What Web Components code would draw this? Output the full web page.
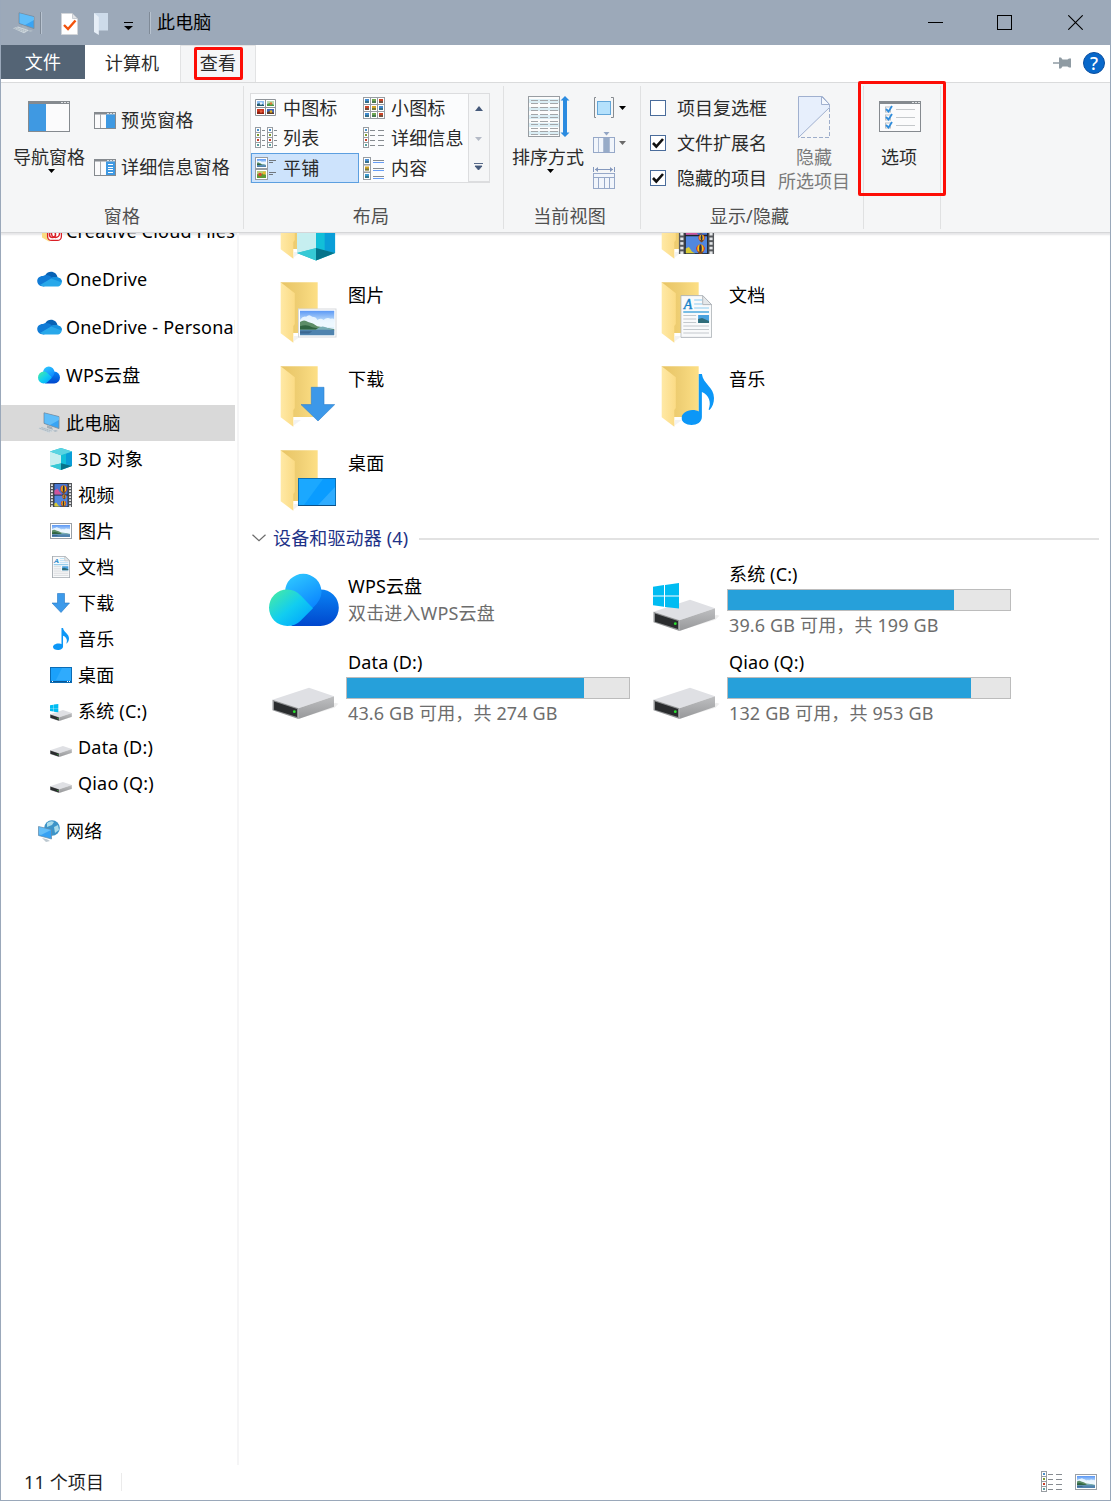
<!DOCTYPE html>
<html lang="zh-CN">
<head>
<meta charset="utf-8">
<title>此电脑</title>
<style>
    html, body { margin: 0; height: 100%; }
    body {
        font: 18px/24px "Noto Sans", "Noto Sans CJK SC", sans-serif;
        letter-spacing: .14px;
        color: #000;
        background: #fff;
        overflow: hidden;
    }
</style>
</head>
<body>
<explorer-window>
    <title-bar slot="title">此电脑</title-bar>
    <ribbon-tabs slot="tabs"></ribbon-tabs>
    <ribbon-bar slot="ribbon"></ribbon-bar>
    <nav-pane slot="nav">
        <nav-item icon="ccfiles" w="25">Creative Cloud Files</nav-item>
        <nav-item icon="onedrive" w="25">OneDrive</nav-item>
        <nav-item icon="onedrive" w="25">OneDrive - Personal</nav-item>
        <nav-item icon="wps">WPS云盘</nav-item>
        <nav-item icon="pc" selected>此电脑</nav-item>
        <nav-item icon="cube" child>3D 对象</nav-item>
        <nav-item icon="film" child>视频</nav-item>
        <nav-item icon="picture" child>图片</nav-item>
        <nav-item icon="doc" child>文档</nav-item>
        <nav-item icon="down" child>下载</nav-item>
        <nav-item icon="music" child>音乐</nav-item>
        <nav-item icon="desktop" child>桌面</nav-item>
        <nav-item icon="driveCsmall" child>系统 (C:)</nav-item>
        <nav-item icon="driveSmall" child>Data (D:)</nav-item>
        <nav-item icon="driveSmall" child>Qiao (Q:)</nav-item>
        <nav-item icon="network">网络</nav-item>
    </nav-pane>
    <file-pane slot="files">
        <folder-tile slot="folders" icon="f3d"></folder-tile>
        <folder-tile slot="folders" icon="fvideo"></folder-tile>
        <folder-tile slot="folders" icon="fpicture">图片</folder-tile>
        <folder-tile slot="folders" icon="fdoc">文档</folder-tile>
        <folder-tile slot="folders" icon="fdown">下载</folder-tile>
        <folder-tile slot="folders" icon="fmusic">音乐</folder-tile>
        <folder-tile slot="folders" icon="fdesktop">桌面</folder-tile>
        <span slot="heading">设备和驱动器 (4)</span>
        <drive-tile slot="drives" icon="wpsBig" note="双击进入WPS云盘">WPS云盘</drive-tile>
        <drive-tile slot="drives" icon="driveC" used="226" note="39.6 GB 可用，共 199 GB">系统 (C:)</drive-tile>
        <drive-tile slot="drives" icon="drive" used="237" note="43.6 GB 可用，共 274 GB">Data (D:)</drive-tile>
        <drive-tile slot="drives" icon="drive" used="243" note="132 GB 可用，共 953 GB">Qiao (Q:)</drive-tile>
    </file-pane>
    <status-bar slot="status">11 个项目</status-bar>
</explorer-window>

<script>
    // ---- icon drawings ----

    const skyGradient = `<linearGradient id="sky" x1="0" y1="0" x2="0" y2="1">
        <stop offset="0" stop-color="#5a97f5"/><stop offset=".5" stop-color="#cfe9fb"/><stop offset="1" stop-color="#e6f4fb"/></linearGradient>`;

    // landscape photo with a white frame
    const photo = (x, y, w, h, frame = '#9aa0a6') => `
        <defs>${skyGradient}</defs>
        <rect x="${x + .5}" y="${y + .5}" width="${w - 1}" height="${h - 1}" fill="#fff" stroke="${frame}"/>
        <svg x="${x + 2}" y="${y + 2}" width="${w - 4}" height="${h - 4}" viewBox="2 2 34 24" preserveAspectRatio="none">
            <rect x="2" y="2" width="34" height="24" fill="url(#sky)"/>
            <path d="M2 11q3-4 6-3 3-3 6 0 4 0 5 3 4-2 6 0 4-3 7-1 3-1 4 1v7H2z" fill="#f2faff" opacity=".85"/>
            <path d="M2 13q4-3 8 0 5 1 9 4l17 3v1H2z" fill="#5c8d68"/>
            <path d="M2 17q7-2 12 1l10 2H2z" fill="#2f6441"/>
            <path d="M18 20q5-4 9-2l9 3H18z" fill="#79aeb6"/>
            <rect x="2" y="20.500" width="34" height="5.500" fill="#4f83ae"/>
            <path d="M2 22h12l-3 2H2z" fill="#3b6791"/>
        </svg>`;

    const film = (x, y, w, h) => {
        let holes = '';
        for (let i = 0; i < 8; i++) {
            holes += `<rect x="1" y="${1.3 + i * 3}" width="2" height="1.700"/><rect x="19.500" y="${1.3 + i * 3}" width="2" height="1.700"/>`;
        }
        const balloon = (cx, cy, r) => `
            <circle cx="${cx}" cy="${cy}" r="${r}" fill="#d82b20"/>
            <ellipse cx="${cx}" cy="${cy}" rx="${r * .75}" ry="${r}" fill="#f2c21a"/>
            <ellipse cx="${cx}" cy="${cy}" rx="${r * .3}" ry="${r}" fill="#252a52"/>
            <path d="M${cx - r * .7} ${cy + r * .7}h${r * 1.4}l-${r * .5} ${r * .7}h-${r * .4}z" fill="#7c471d"/>`;
        return `<svg x="${x}" y="${y}" width="${w}" height="${h}" viewBox="0 0 22.500 24" preserveAspectRatio="none">
            <rect width="22.500" height="24" fill="#55585c"/><g fill="#e4e6e8">${holes}</g>
            <rect x="3.700" width="15" height="24" fill="#202228"/>
            <rect x="4.500" y=".8" width="13.500" height="10.700" fill="#4775cf"/>
            <rect x="4.500" y="12.500" width="13.500" height="11" fill="#5187df"/>
            <path d="M4.500 11.500v-4l3-2 2 3 3 3z" fill="#d0559b"/>
            ${balloon(14, 6, 3.400)}${balloon(14.500, 13.500, 2)}${balloon(13.800, 20.500, 2.700)}
            <path d="M4.500 23.500v-3l2-1 2 3 2 1z" fill="#d9cb35"/>
        </svg>`;
    };

    const cube = `
        <path d="M11 0L22 3.500V18L11 22 0 18V3.500z" fill="#23bccb"/>
        <path d="M0 3.500l11 3.800v8.200L0 18z" fill="#c6eff0"/>
        <path d="M22 3.500L11 7.300v8.200L22 18z" fill="#0a9ed8"/>
        <path d="M11 7.300l5-2v12l-5-1.800z" fill="#12bfd8"/>
        <path d="M0 3.500L11 0l11 3.500L11 7.300z" fill="#59d4e2"/>
        <path d="M0 18l11-2.700V22z" fill="#36c9d5"/>
        <path d="M22 18l-11-2.700V22z" fill="#05748b"/>`;

    const wps = `
        <defs>
            <linearGradient id="w1" x1=".2" y1="0" x2=".8" y2="1"><stop offset="0" stop-color="#2fc8ff"/><stop offset="1" stop-color="#0a84ff"/></linearGradient>
            <linearGradient id="w2" x1="0" y1=".2" x2=".8" y2="1"><stop offset="0" stop-color="#41e8ac"/><stop offset=".5" stop-color="#12cdf0"/><stop offset="1" stop-color="#00a6ff"/></linearGradient>
            <linearGradient id="w3" x1=".6" y1="0" x2=".6" y2="1"><stop offset="0" stop-color="#0a84f5"/><stop offset="1" stop-color="#0047cd"/></linearGradient>
        </defs>
        <path d="M51.500 15.700a18.300 18.300 0 0 1 0 36.600H22L42 30z" fill="url(#w3)"/>
        <path d="M16 18.300A18.250 18.250 0 0 1 52.500 18.300q0 8-9 16.200L32 25q-6-7-16-6z" fill="url(#w1)"/>
        <path d="M18.300 15.700A18.300 18.300 0 0 0 18.300 52.300q8 0 13-5L44 34.500 32 22q-6-6.300-13.700-6.300z" fill="url(#w2)"/>`;

    const pc = `
        <path d="M6 .8l15 3.800v12L6 11.400z" fill="#39a4f4" stroke="#7c8a97" stroke-width=".8"/>
        <path d="M6.500 1.300L21 5v3L12 13l-5.500-2z" fill="#6cc6fb" opacity=".75"/>
        <path d="M9 13.200l5 1.800 1 3-6-1.500z" fill="#a4b0b9"/>
        <path d="M0 16.200l5-1.700 11 3.700-5 3z" fill="#cfd8de"/>
        <path d="M1.500 16.300l10 3.400M3.500 15.600l10 3.300" stroke="#8695a1" stroke-width=".6" stroke-dasharray="1.400 .6"/>
        <path d="M15 18.500l3-.5 2 1-3 1z" fill="#aebbc5"/>`;

    const docLines = (x, y, w, h) => `
        <svg x="${x}" y="${y}" width="${w}" height="${h}" viewBox="0 0 32 43" preserveAspectRatio="none">
            <path d="M.6.6h22l9 9v32.800H.6z" fill="#f9fafb" stroke="#a4aab0" stroke-width="${w < 20 ? 2 : .8}"/>
            <path d="M22.600.6v9h9z" fill="#e5e8ea" stroke="#b0b5ba"/>
            <text x="3.500" y="14" font-family="Liberation Serif" font-style="italic" font-size="14" fill="#1583c9" stroke="#1583c9" stroke-width=".4">A</text>
            <path d="M14 5h8M14 9h8M14 13h15" stroke="#8bcdf0"/>
            <path d="M3 17h26" stroke="#4ba8de" stroke-width="1.300"/>
            <path d="M3 20.500h13M3 24h13M3 27.500h13M3 31h26M3 34.500h26M3 38h26" stroke="#c4c9cd"/>
            <rect x="18" y="20" width="11" height="8" fill="#4aa2df"/>
            <path d="M18 24l4-1 7 3v2H18z" fill="#2e6c79"/>
        </svg>`;

    const note = (x, y, w, h) => `
        <svg x="${x}" y="${y}" width="${w}" height="${h}" viewBox="0 0 33 51" preserveAspectRatio="none">
            <path d="M17.500 0h3.200c1.300 10 12.300 13 12.300 24 0 5-1.500 9-4.500 12l-1-.6c3-7 .5-14.500-6.800-17.500V43c0 5-5 8-10.500 8S0 48 0 44s5-8 11-8c3 0 5 .5 6.500 1.500z" fill="#0c97f7"/>
        </svg>`;

    const drive = `
        <defs>
            <linearGradient id="side" x1="0" y1="0" x2="0" y2="1"><stop offset="0" stop-color="#bebfc1"/><stop offset="1" stop-color="#97989a"/></linearGradient>
        </defs>
        <path d="M26 31l36-11 4-4-3-1z" fill="#000" opacity=".07"/>
        <path d="M0 12L36.500 0 61.500 8.500 26 20.500z" fill="#dfe0e4"/>
        <path d="M26 20.500L61.500 8.500V19L26 31.200z" fill="url(#side)"/>
        <path d="M0 12l26 8.500v10.700L0 22.500z" fill="#909294"/>
        <path d="M1.500 13.700l23 7.600v8L1.500 22z" fill="#2a2c2e"/>
        <circle cx="21.800" cy="24" r="1.400" fill="#2be331"/>`;

    const winLogo = `<path d="M0 3.700L11 2v10.500H0zM12 1.900L26 0v12.500H12zM0 13.500h11v10.300L0 22.200zM12 13.500h14v12L12 23.900z" fill="#00bcf2"/>`;

    const folder = `
        <defs>
            <linearGradient id="fb" x1="0" y1="0" x2="1" y2="0"><stop offset="0" stop-color="#e8c464"/><stop offset=".5" stop-color="#efcf74"/><stop offset="1" stop-color="#fddf85"/></linearGradient>
            <linearGradient id="ff" x1="0" y1="0" x2="1" y2="0"><stop offset="0" stop-color="#ffe9a6"/><stop offset="1" stop-color="#fbdb85"/></linearGradient>
        </defs>
        <path d="M24 60l7 0-8 6z" fill="#000" opacity=".05"/>
        <path d="M10.700 6.300h37V57H23z" fill="url(#fb)"/>
        <path d="M10.700 6.300l14.100 11V48l-1.500 2v16.700l-12.600-9.400z" fill="url(#ff)"/>`;

    const frame = (w, h) => `
        <rect x=".5" y=".5" width="${w - 1}" height="${h - 1}" fill="#fbfbfc" stroke="#858a8f"/>
        <rect width="${w}" height="${h > 20 ? 3 : 2.500}" fill="#858a8f"/>
        <path d="M${w - 9} 1.500h8" stroke="#dfe1e3" stroke-dasharray="2 1"/>`;

    const thumb = (x, y, s, c) => `
        <rect x="${x + .5}" y="${y + .5}" width="${s - 1}" height="${s - 1}" fill="#fff" stroke="#989da2"/>
        <rect x="${x + 2}" y="${y + 2}" width="${s - 4}" height="${s - 4}" fill="${c}"/>
        <rect x="${x + 2}" y="${y + s / 2}" width="${s - 4}" height="${s / 2 - 2}" fill="#2c5a50" opacity=".55"/>`;

    // picture cell of the medium icon grid: sky over a coloured lower part
    const cell = (x, y, top, bottom, dot) => `
        <rect x="${x}" y="${y}" width="7" height="5" fill="${top}"/>
        <path d="M${x} ${y + 5}v-2l3-1 4 2v1z" fill="${bottom}"/>
        <circle cx="${x + 4}" cy="${y + 2.500}" r="1.300" fill="${dot}"/>`;

    const tinyRows = (x) => ['#4a90c9', '#7f9b30', '#c9402a', '#5aa0a0'].map((c, i) => `
        <rect x="${x + .5}" y="${.5 + i * 5}" width="5" height="5" fill="#fff" stroke="#989da2"/>
        <rect x="${x + 2}" y="${2 + i * 5}" width="2" height="2" fill="${c}"/>`).join('');

    // name: [width, height, drawing]
    const ICONS = {
        ccfiles: [25, 22, `<path d="M5 0h15v18l-8 3.500-7-4z" fill="#fadb82"/><rect x="10.600" y="6.600" width="13.800" height="13.800" rx="4" fill="#fff" stroke="#da1f26" stroke-width="1.300"/>
            <circle cx="15.500" cy="14.500" r="3" fill="none" stroke="#da1f26" stroke-width="1.500"/><circle cx="18.500" cy="13.500" r="4" fill="none" stroke="#da1f26" stroke-width="1.500"/>`],
        onedrive: [25, 22, `<path d="M8 7.500C12 1 20 4 20.500 9.500L12 13z" fill="#0762b5"/>
            <path d="M6.500 18.500C-1.500 18.500-2 8 6 8c5-3 9 2 12 3.500L8 18z" fill="#107bd6"/>
            <path d="M14 10.500c3-2 7-1.500 7.500-.8C26 10.500 26 18.500 20 18.500H6.500L3 17z" fill="#28a8ea"/>
            <path d="M14 10.500c3-2.500 6-1.500 7.500-.8 3 .5 3.500 3 3.400 4.800z" fill="#1490df"/>`],
        wps: [22, 22, `<g transform="translate(0 2.500) scale(.315 .325)">${wps}</g>`],
        wpsBig: [72, 78, `<g transform="translate(0 17.700)">${wps}</g>`],
        pc: [22, 22, pc],
        cube: [22, 22, cube],
        film: [22, 24, film(0, 0, 22, 24)],
        picture: [22, 22, photo(0, 3, 22, 16)],
        doc: [22, 22, docLines(2, 0, 18, 22)],
        down: [22, 22, `<path d="M7.500 1.500h7v9.500h5L11 20.500 2 11h5.500z" fill="#3d9aea" stroke="#2377c4" stroke-width=".6"/>`],
        music: [22, 22, note(3, 0, 16, 22)],
        desktop: [22, 22, `<rect x=".5" y="3.500" width="21" height="15" fill="#1ba1fb" stroke="#0b6cb5"/><path d="M1 18v-1h20v1z" fill="#0b5796"/><path d="M12 4h9v12H6z" fill="#3eb2ff" opacity=".6"/><path d="M2 17.500h1M17 17.500h4" stroke="#fff" stroke-dasharray="1 1"/>`],
        driveSmall: [22, 22, `<g transform="translate(0 10) scale(.355)">${drive}</g>`],
        driveCsmall: [22, 22, `<g transform="translate(0 10) scale(.355)">${drive}</g><g transform="translate(0 4) scale(.32)">${winLogo}</g>`],
        network: [22, 22, `<circle cx="14" cy="8" r="7.800" fill="#3d94c8"/><path d="M9 3q4-3 7-1l-2 3-5 2zM16 7l4-2 1 5-4 3z" fill="#a9dbea"/>
            <path d="M.5 6.500l13 3v9.500l-13-3.500z" fill="#36a1f3" stroke="#698ba5" stroke-width=".7"/><path d="M1 7l12 3-10 5-2-.5z" fill="#78cafa" opacity=".7"/><path d="M4 18l5 1.300 3 1.700-4 1z" fill="#bcc8d0"/>`],

        f3d: [72, 84, `${folder}<g transform="translate(27 27) scale(1.730 1.890)">${cube}</g>`],
        fvideo: [72, 84, folder + film(27.700, 25, 35.500, 37)],
        fpicture: [72, 84, folder + photo(28, 32.500, 38.500, 29, '#d7dadd')],
        fdoc: [72, 84, folder + docLines(29.300, 19, 31.700, 43)],
        fdown: [72, 84, `${folder}<path d="M41.300 27.300H54v17.300h10.700L48 61 31 44.600h10.300z" fill="#3c98e9" stroke="#2c7fcc" stroke-width=".6"/>`],
        fmusic: [72, 84, folder + note(30.500, 14, 32.500, 51)],
        fdesktop: [72, 84, `${folder}<rect x="28.500" y="34.500" width="37" height="27" fill="#0a9cff" stroke="#0a70b5"/><path d="M29 35h24L34 61h-5z" fill="#1ba8ff"/><path d="M65 43v18H48z" fill="#38b0ff" opacity=".8"/><path d="M28 61.500h38" stroke="#0b4f86"/>`],
        drive: [72, 78, `<g transform="translate(3.500 43.700)">${drive}</g>`],
        driveC: [72, 78, `<g transform="translate(3.500 43.700)">${drive}</g><g transform="translate(3 27)">${winLogo}</g>`],

        check: [17, 22, `<path d="M.5.500h11l5 5v16H.5z" fill="#fff" stroke="#d2d5d9"/><path d="M11.500.5v5h5z" fill="#e1e4e8" stroke="#aeb5bd" stroke-width=".6"/><path d="M3 12l4 4 7.500-8.500" fill="none" stroke="#f2520c" stroke-width="2.400"/>`],
        ghostFolder: [15, 22, `<path d="M0 0h14v17.500H4z" fill="#cddbea"/><path d="M0 0l4.800 4v18L0 19z" fill="#e6eef7"/>`],
        qaMenu: [9, 8, `<path d="M0 .5h9" stroke="#000"/><path d="M0 4h9L4.500 8z"/>`],
        min: [15, 15, `<path d="M0 7.500h15" stroke="#000"/>`],
        max: [15, 15, `<rect x=".5" y=".5" width="14" height="14" fill="none" stroke="#000"/>`],
        close: [15, 15, `<path d="M.3.300l14.400 14.400M14.700.300L.3 14.700" stroke="#000" stroke-width="1.100"/>`],
        pin: [18, 12, `<path d="M0 6h7" stroke="#8f9ba3" stroke-width="1.500"/><path d="M6 .5h2l1.500 2h5L16 1.500h2v9h-2l-1.500-1h-5L8 11.500H6z" fill="#8f9ba3"/>`],

        navPane: [42, 31, `${frame(42, 31)}<rect x="1" y="3" width="17" height="27" fill="#3f99e2"/>`],
        preview: [22, 17, `${frame(22, 17)}<path d="M6.500 2v14" stroke="#a6abb0"/><rect x="12" y="2.500" width="9" height="13.500" fill="#3f99e2"/>`],
        details: [22, 17, `${frame(22, 17)}<path d="M6.500 2v14" stroke="#a6abb0"/><rect x="12" y="2.500" width="9" height="13.500" fill="#3f99e2"/><path d="M14 5.500h5M14 8.500h5M14 10.500h5M14 13.500h5" stroke="#fff"/>`],
        medium: [22, 22, `<path d="M.5 2.500h20v16h-20zM.5 10.500h20M10.500 2.500v16" fill="#fff" stroke="#8f9499"/>`
            + cell(2, 4, '#8fc0f5', '#23596d', '#e8f4fd') + cell(12, 4, '#b9dbb0', '#4c9a45', '#e07b35')
            + cell(2, 12, '#c9351f', '#8f2110', '#e8603c') + cell(12, 12, '#3f64b5', '#5e3d28', '#e6b41f')],
        small: [22, 22, [0, 1, 2].map(r => [0, 1, 2].map(c => thumb(c * 7, r * 7, 8, ['#3f8ad0', '#6fa552', '#cc4427', '#d3a322'][(r * 2 + c) % 4])).join('')).join('')],
        list: [22, 22, `${tinyRows(0)}${tinyRows(12)}<path d="M7 3.500h3M7 8.500h3M7 13.500h3M7 18.500h3M19 3.500h3M19 8.500h3M19 13.500h3M19 18.500h3" stroke="#868b90"/>`],
        detail: [22, 22, `${tinyRows(0)}<path d="M7 3.500h5M7 8.500h5M7 13.500h5M7 18.500h5M15 3.500h6M15 8.500h6M15 13.500h6M15 18.500h6" stroke="#868b90"/>`],
        tiles: [22, 23, photo(0, 0, 13, 12, '#989da2')
            + `<rect x=".5" y="12.500" width="12" height="10" fill="#fff" stroke="#989da2"/><rect x="2" y="14" width="9" height="7" fill="#b9cf7a"/><path d="M2 21v-4l3 1 3-2 3 2v3z" fill="#5d9a35"/><circle cx="5" cy="17.500" r="1.800" fill="#d9482b"/><circle cx="9" cy="16" r="1.500" fill="#efb72b"/>
            <path d="M14 3.500h7M14 5.500h4M14 15.500h7M14 17.500h4" stroke="#70777e"/>`],
        content: [22, 23, thumb(0, 0, 8, '#4a91d8') + thumb(0, 7.500, 8, '#d3a322') + thumb(0, 15, 8, '#3e9bd0')
            + `<path d="M10 3.500h11M10 11.500h11M10 19.500h11" stroke="#868b90"/><path d="M10 5.500h11M10 13.500h11M10 21.500h11" stroke="#669df6"/>`],
        sort: [44, 41, `<g transform="translate(2 0)"><rect x=".5" y=".5" width="31" height="40" fill="#fcfcfc" stroke="#989da2"/>`
            + [3, 11, 19, 27, 35].map(y => `<rect x="1" y="${y}" width="30" height="4" fill="#dbeef5"/>`).join('')
            + [4, 7, 11, 14, 18, 21, 25, 28, 32, 35, 38].map(y => `<path d="M3 ${y}.500h7M12 ${y}.500h8M22 ${y}.500h8" stroke="#a3a6a9"/>`).join('')
            + `<path d="M37 0l4.500 4.500H39v32h2.500L37 41 32.500 36.500H35v-32h-2.500z" fill="#2b8be0"/></g>`],
        group: [22, 22, `<path d="M3 .5H1.500v20H3M18 .5h2.500v20H18" fill="none" stroke="#868b90"/><rect x="4.500" y="4.500" width="13" height="13" fill="#b5e1fc" stroke="#63a6d8"/>`],
        column: [22, 22, `<path d="M10.500 0h6l-3 3.500z" fill="#92a5c4"/><rect x=".5" y="5.500" width="21" height="15" fill="#f1f5fb" stroke="#96a8c8"/><rect x="11" y="6" width="5" height="14" fill="#97abc8"/><path d="M5.500 6v14M10.500 6v14M16.500 6v14" stroke="#aebcd4"/>`],
        fit: [22, 22, `<path d="M.5 0v5M21.500 0v5M2 2.500h18" stroke="#8498bd"/><path d="M2 2.500l3-2.500v5zM20 2.500L17 0v5z" fill="#8498bd"/><rect x=".5" y="6.500" width="21" height="15" fill="#f1f5fb" stroke="#96a8c8"/><path d="M1 10.500h20M5.500 11v10M11.500 11v10M16.500 11v10" stroke="#96a8c8"/>`],
        hide: [33, 42, `<path d="M.5.500h24l7 8v3L.5 41.500z" fill="#e7effc" stroke="#a0b0cf"/><path d="M23.500.5v8h8z" fill="#f5f8fd" stroke="#a0b0cf"/><path d="M31.500 12v29.500H.5" fill="none" stroke="#9dadca" stroke-dasharray="4 2"/>`],
        options: [44, 31, `<g transform="translate(2 0)">${frame(42, 31)}` + [8, 16, 24].map(y => `<rect x="6.500" y="${y - 2}" width="5" height="5" fill="#fff" stroke="#b9bfc5"/><path d="M7 ${y}l2.500 2.500L13 ${y - 3}" stroke="#2f8ddd" stroke-width="1.800" fill="none"/><path d="M17 ${y + .5}h19" stroke="#c5c8cb"/>`).join('') + '</g>'],
        tick: [14, 14, `<path d="M2 7l3.300 3.500L12 3" fill="none" stroke="#111" stroke-width="2.600"/>`],
        arrow: [7, 4, `<path d="M0 0h7L3.500 4z" fill="currentColor"/>`],
        arrowUp: [8, 5, `<path d="M0 5h8L4 0z" fill="currentColor"/>`],
        more: [9, 8, `<path d="M0 .5h9M1 3h7L4.500 7z" stroke="currentColor" fill="currentColor" stroke-width=".9"/>`],
        chevron: [14, 8, `<path d="M.5.700l6.500 6 6.500-6" fill="none" stroke="#6b6b6b" stroke-width="1.200"/>`]
    };

    // small helper: every element renders its markup once into an open root
    class BaseElement extends HTMLElement {
        connectedCallback() {
            if (this.shadowRoot) return;
            this.attachShadow({ mode: 'open' });
            this.shadowRoot.innerHTML = this.render();
        }
    }

    class WinIcon extends BaseElement {
        render() {
            const [w, h, body] = ICONS[this.getAttribute('name')];
            return `
                <style>
                    :host { display: inline-flex; flex: none; }
                    svg { display: block; }
                </style>
                <svg width="${w}" height="${h}" viewBox="0 0 ${w} ${h}" fill="#000">${body}</svg>`;
        }
    }
    customElements.define('win-icon', WinIcon);

    class ExplorerWindow extends BaseElement {
        render() {
            return `
                <style>
                    :host {
                        display: flex; flex-direction: column; position: relative;
                        box-sizing: border-box; width: 1111px; height: 1501px;
                        border: 1px solid #9aa8ba; border-top: 0; overflow: hidden;
                    }
                    .main { display: flex; height: 1232px; overflow: hidden; box-shadow: inset 0 3px 2px -1px #e6e6e8; }
                    .mark { position: absolute; box-sizing: border-box; border: 3px solid #fd0d06; border-radius: 2px; }
                    .tab { left: 193px; top: 47px; width: 49px; height: 33px; }
                    .opt { left: 857px; top: 81px; width: 88px; height: 115px; }
                </style>
                <slot name="title"></slot>
                <slot name="tabs"></slot>
                <slot name="ribbon"></slot>
                <div class="main"><slot name="nav"></slot><slot name="files"></slot></div>
                <slot name="status"></slot>
                <div class="mark tab"></div>
                <div class="mark opt"></div>`;
        }
    }
    customElements.define('explorer-window', ExplorerWindow);

    class TitleBar extends BaseElement {
        render() {
            return `
                <style>
                    :host { display: flex; align-items: center; height: 45px; background: #9ca9b9; margin: 0 -1px; padding-left: 13px; flex: none; }
                    i { width: 1px; height: 22px; background: #7f8a97; border-right: 1px solid #b8c3d0; }
                    .title { margin-left: 6px; padding-bottom: 1px; }
                    .buttons { display: flex; align-items: center; gap: 54px; margin-left: auto; padding-right: 28px; }
                </style>
                <win-icon name="pc"></win-icon>
                <i style="margin-left:5px"></i>
                <win-icon name="check" style="margin-left:19px; padding-top:2px"></win-icon>
                <win-icon name="ghostFolder" style="margin-left:16px; padding-top:2px"></win-icon>
                <win-icon name="qaMenu" style="margin-left:15px; padding-top:6px"></win-icon>
                <i style="margin-left:16px"></i>
                <span class="title"><slot></slot></span>
                <div class="buttons">
                    <win-icon name="min"></win-icon>
                    <win-icon name="max"></win-icon>
                    <win-icon name="close" style="margin-left:2px"></win-icon>
                </div>`;
        }
    }
    customElements.define('title-bar', TitleBar);

    class RibbonTabs extends BaseElement {
        render() {
            return `
                <style>
                    :host { display: flex; box-sizing: border-box; height: 38px; flex: none; border-bottom: 1px solid #dadbdc; background: #fff; color: #2b2b2b; }
                    div { display: flex; justify-content: center; align-items: center; box-sizing: border-box; height: 37px; padding-bottom: 1px; }
                    .file { width: 84px; height: 34px; background: #546475; color: #fff; padding-bottom: 0; }
                    .computer { width: 95px; padding-right: 1px; }
                    .view { width: 76px; background: #f5f6f7; border: 1px solid #e2e3e4; border-width: 1px 1px 0; padding-bottom: 2px; }
                    .right { margin-left: auto; gap: 12px; padding-right: 5px; }
                    b { display: flex; justify-content: center; align-items: center; width: 20px; height: 20px; border: 1px solid #0b4fa0; border-radius: 50%; background: #0868ca; color: #fff; font-size: 18px; font-weight: 500; }
                </style>
                <div class="file">文件</div>
                <div class="computer">计算机</div>
                <div class="view">查看</div>
                <div class="right"><win-icon name="pin"></win-icon><b>?</b></div>`;
        }
    }
    customElements.define('ribbon-tabs', RibbonTabs);

    class RibbonGroup extends BaseElement {
        render() {
            return `
                <style>
                    :host { display: flex; flex-direction: column; box-sizing: border-box; height: 143px; border-right: 1px solid #e0e1e2; }
                    .body { display: flex; height: 118px; }
                    .label { text-align: center; color: #505050; padding-right: var(--label-shift, 0); }
                </style>
                <div class="body"><slot></slot></div>
                <div class="label">${this.getAttribute('label') || ''}</div>`;
        }
    }
    customElements.define('ribbon-group', RibbonGroup);

    class LargeButton extends BaseElement {
        render() {
            return `
                <style>
                    :host { display: flex; flex-direction: column; align-items: center; width: 72px; color: #2b2b2b; text-align: center; white-space: nowrap; letter-spacing: 0; }
                    :host([disabled]) { color: #7b7b7b; }
                    .icon { display: flex; align-items: center; height: 59px; box-sizing: border-box; padding-top: 2px; }
                    .arrow { color: #000; display: flex; padding-left: 4px; }
                </style>
                <div class="icon"><win-icon name="${this.getAttribute('icon')}"></win-icon></div>
                <div><slot></slot></div>
                ${this.hasAttribute('menu') ? '<div class="arrow"><win-icon name="arrow"></win-icon></div>' : ''}`;
        }
    }
    customElements.define('large-button', LargeButton);

    class SmallButton extends BaseElement {
        render() {
            return `
                <style>
                    :host { display: flex; align-items: center; height: 30px; gap: 5px; color: #2b2b2b; white-space: nowrap; }
                </style>
                <win-icon name="${this.getAttribute('icon')}"></win-icon><span><slot></slot></span>`;
        }
    }
    customElements.define('small-button', SmallButton);

    class LayoutGallery extends BaseElement {
        render() {
            const items = [
                ['medium', '中图标'], ['small', '小图标'],
                ['list', '列表'], ['detail', '详细信息'],
                ['tiles', '平铺'], ['content', '内容']
            ];
            return `
                <style>
                    :host { display: flex; width: 240px; height: 90px; background: #fbfcfd; box-shadow: inset 0 0 0 1px #dcdddf; color: #2b2b2b; }
                    .grid { display: grid; grid-template-columns: 108px 109px; grid-auto-rows: 30px; padding-left: 1px; }
                    .item { display: flex; align-items: center; box-sizing: border-box; gap: 6px; padding-left: 4px; white-space: nowrap; }
                    .on { background: #cde3fc; border: 1px solid #5c9fe0; padding-left: 3px; }
                    .scroll { display: flex; flex-direction: column; width: 22px; box-sizing: border-box; height: 89px; border: 1px solid #dcdddf; background: #f5f6f7; color: #45597a; }
                    .scroll div { flex: 1; display: flex; align-items: center; justify-content: center; padding-right: 1px; }
                    .off { color: #b4bac6; padding-top: 3px; }
                </style>
                <div class="grid">
                    ${items.map(([icon, text]) => `<div class="item ${icon === 'tiles' ? 'on' : ''}"><win-icon name="${icon}"></win-icon>${text}</div>`).join('')}
                </div>
                <div class="scroll">
                    <div><win-icon name="arrowUp"></win-icon></div>
                    <div class="off"><win-icon name="arrow"></win-icon></div>
                    <div><win-icon name="more"></win-icon></div>
                </div>`;
        }
    }
    customElements.define('layout-gallery', LayoutGallery);

    class CheckRow extends BaseElement {
        render() {
            return `
                <style>
                    :host { display: flex; align-items: center; gap: 11px; height: 34px; color: #2b2b2b; white-space: nowrap; letter-spacing: 0; }
                    .box { display: flex; box-sizing: border-box; width: 16px; height: 16px; border: 1px solid #4a6c9b; background: #fff; }
                </style>
                <div class="box">${this.hasAttribute('checked') ? '<win-icon name="tick"></win-icon>' : ''}</div>
                <span><slot></slot></span>`;
        }
    }
    customElements.define('check-row', CheckRow);

    class RibbonBar extends BaseElement {
        render() {
            return `
                <style>
                    :host { display: flex; box-sizing: border-box; height: 150px; padding: 3px 0; flex: none; background: #f5f6f7; border-bottom: 1px solid #d5d6d8; }
                    .col { display: flex; flex-direction: column; }
                    .mini { display: flex; align-items: center; gap: 4px; height: 22px; }
                </style>
                <ribbon-group label="窗格" style="width:243px">
                    <large-button icon="navPane" menu style="margin-left:12px">导航窗格</large-button>
                    <div class="col" style="margin-left:9px; padding-top:19px; gap:17px">
                        <small-button icon="preview">预览窗格</small-button>
                        <small-button icon="details">详细信息窗格</small-button>
                    </div>
                </ribbon-group>
                <ribbon-group label="布局" style="width:260px; --label-shift:5px">
                    <layout-gallery style="margin:7px 0 0 6px"></layout-gallery>
                </ribbon-group>
                <ribbon-group label="当前视图" style="width:137px; --label-shift:5px">
                    <large-button icon="sort" menu style="margin-left:8px">排序方式</large-button>
                    <div class="col" style="margin-left:9px; padding-top:11px; gap:13px">
                        <div class="mini"><win-icon name="group"></win-icon><win-icon name="arrow"></win-icon></div>
                        <div class="mini"><win-icon name="column"></win-icon><win-icon name="arrow" style="color:#6a6a6a"></win-icon></div>
                        <div class="mini"><win-icon name="fit"></win-icon></div>
                    </div>
                </ribbon-group>
                <ribbon-group label="显示/隐藏" style="width:223px; --label-shift:5px">
                    <div class="col" style="margin-left:9px; padding-top:5px; gap:1px">
                        <check-row>项目复选框</check-row>
                        <check-row checked>文件扩展名</check-row>
                        <check-row checked>隐藏的项目</check-row>
                    </div>
                    <large-button icon="hide" disabled style="margin-left:11px">隐藏<br>所选项目</large-button>
                </ribbon-group>
                <ribbon-group style="width:77px">
                    <large-button icon="options" style="width:70px">选项</large-button>
                </ribbon-group>`;
        }
    }
    customElements.define('ribbon-bar', RibbonBar);

    class NavPane extends BaseElement {
        render() {
            return `
                <style>
                    :host { display: block; width: 234px; flex: none; overflow: hidden; }
                    .list { display: flex; flex-direction: column; margin-top: -20px; }
                </style>
                <div class="list"><slot></slot></div>`;
        }
    }
    customElements.define('nav-pane', NavPane);

    class NavItem extends BaseElement {
        render() {
            return `
                <style>
                    :host { display: flex; align-items: center; height: 36px; margin-bottom: 12px; padding-left: 35px; white-space: nowrap; letter-spacing: .2px; }
                    :host([selected]) { background: #d9d9d9; margin-bottom: 0; }
                    :host([child]) { padding-left: 47px; margin-bottom: 0; }
                    :host(:nth-child(15)) { margin-bottom: 12px; }
                    .icon { display: flex; justify-content: center; width: 26px; margin-right: 4px; flex: none; }
                </style>
                <span class="icon"><win-icon name="${this.getAttribute('icon')}"></win-icon></span><span><slot></slot></span>`;
        }
    }
    customElements.define('nav-item', NavItem);

    class FilePane extends BaseElement {
        render() {
            return `
                <style>
                    :host { display: flex; flex-direction: column; flex: 1; margin-left: 2px; border-left: 2px solid #f5f5f6; overflow: hidden; }
                    .folders, .drives { display: grid; grid-template-columns: 381px 381px; flex: none; }
                    .folders { margin: -41px 0 0 31px; grid-auto-rows: 84px; }
                    .heading { display: flex; align-items: center; height: 24px; margin: -2px 11px 0 13px; color: #1e3287; flex: none; }
                    .heading span { margin: 0 11px 0 7px; }
                    hr { flex: 1; height: 2px; margin: 2px 0 0; border: 0; background: #e2e2e2; }
                    .drives { margin: 6px 0 0 30px; grid-auto-rows: 88px; }
                </style>
                <div class="folders"><slot name="folders"></slot></div>
                <div class="heading"><win-icon name="chevron"></win-icon><span><slot name="heading"></slot></span><hr></div>
                <div class="drives"><slot name="drives"></slot></div>`;
        }
    }
    customElements.define('file-pane', FilePane);

    class FolderTile extends BaseElement {
        render() {
            return `
                <style>
                    :host { display: flex; gap: 6px; }
                    .name { padding-top: 7px; }
                </style>
                <win-icon name="${this.getAttribute('icon')}"></win-icon>
                <div class="name"><slot></slot></div>`;
        }
    }
    customElements.define('folder-tile', FolderTile);

    class DriveTile extends BaseElement {
        render() {
            const used = this.getAttribute('used');
            return `
                <style>
                    :host { display: flex; gap: 5px; height: 88px; }
                    .text { display: flex; flex-direction: column; padding-top: ${used ? 6 : 18}px; }
                    .text > span { padding-left: 2px; }
                    .bar { box-sizing: border-box; width: 284px; height: 22px; margin: 3px 0 2px; border: 1px solid #bcbcbc; background: #e6e6e6; }
                    .fill { width: ${used}px; height: 20px; background: #26a0da; }
                    .note { color: #6d6d6d; margin-top: ${used ? 0 : 3}px; }
                </style>
                <win-icon name="${this.getAttribute('icon')}"></win-icon>
                <div class="text">
                    <span><slot></slot></span>
                    ${used ? '<div class="bar"><div class="fill"></div></div>' : ''}
                    <span class="note">${this.getAttribute('note')}</span>
                </div>`;
        }
    }
    customElements.define('drive-tile', DriveTile);

    class StatusBar extends BaseElement {
        render() {
            return `
                <style>
                    :host { display: flex; align-items: center; flex: 1; padding: 0 13px 2px 23px; color: #1e1e1e; }
                    i { width: 1px; height: 18px; margin-left: 17px; background: #ebebeb; }
                    .views { display: flex; align-items: center; gap: 12px; margin-left: auto; }
                </style>
                <slot></slot><i></i>
                <div class="views"><win-icon name="detail"></win-icon><win-icon name="picture"></win-icon></div>`;
        }
    }
    customElements.define('status-bar', StatusBar);
</script>
</body>
</html>
